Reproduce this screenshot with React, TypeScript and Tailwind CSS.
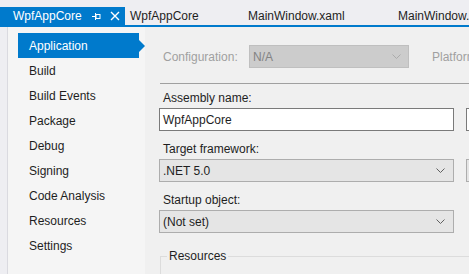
import React from "react";

const Chevron = ({ color = "#606060" }: { color?: string }) => (
  <svg width="9" height="5" viewBox="0 0 9 5" fill="none">
    <path d="M0.5 0.5 L4.5 4.5 L8.5 0.5" stroke={color} strokeWidth="1" />
  </svg>
);

export default function App() {
  const items = ["Build", "Build Events", "Package", "Debug", "Signing", "Code Analysis", "Resources", "Settings"];
  return (
    <div
      className="w-[469px] h-[274px] overflow-hidden flex flex-col bg-[#eeeef2] text-[12px] text-[#1e1e1e]"
      style={{ fontFamily: '"Liberation Sans", Arial, sans-serif' }}
    >
      {/* Tabs */}
      <div className="h-[25px] pt-[7px] flex shrink-0 whitespace-nowrap">
        <div className="w-[125px] h-[18px] bg-[#007acc] text-white flex items-center pl-[13px] shrink-0">
          <span className="leading-[18px]">WpfAppCore</span>
          <svg className="ml-[10px]" width="9" height="9" viewBox="0 0 9 9" fill="none">
            <path d="M0 4.5 H3" stroke="white" strokeWidth="1" />
            <path d="M3.5 1 V8" stroke="white" strokeWidth="1" />
            <rect x="4" y="2.5" width="4" height="4" stroke="white" strokeWidth="1" />
          </svg>
          <svg className="ml-[9px]" width="10" height="10" viewBox="0 0 10 10" fill="none">
            <path d="M1 1 L9 9 M9 1 L1 9" stroke="white" strokeWidth="1.4" />
          </svg>
        </div>
        <div className="w-[118px] h-[18px] pl-[5px] flex items-center shrink-0 text-[#1e1e1e]">WpfAppCore</div>
        <div className="w-[150px] h-[18px] pl-[5px] flex items-center shrink-0 text-[#1e1e1e]">MainWindow.xaml</div>
        <div className="h-[18px] pl-[5px] flex items-center shrink-0 text-[#1e1e1e]">MainWindow.xaml.cs</div>
      </div>
      <div className="h-[2px] bg-[#007acc] shrink-0" />

      {/* Body */}
      <div className="flex flex-1 min-h-0">
        <div className="w-[8px] shrink-0 bg-[#eeeef2] border-r border-[#dadae0]" />
        {/* Sidebar */}
        <div className="w-[137px] shrink-0 bg-[#f5f5f5] pt-[6px] pl-[10px]">
          <div className="flex items-center h-[25px]">
            <div className="w-[121px] h-[25px] bg-[#007acc] text-white pl-[11px] flex items-center">Application</div>
            <div className="w-0 h-0 border-t-[6px] border-b-[6px] border-l-[6px] border-t-transparent border-b-transparent border-l-[#007acc]" />
          </div>
          {items.map((it) => (
            <div key={it} className="h-[25px] pl-[11px] flex items-center">
              {it}
            </div>
          ))}
        </div>
        {/* Content */}
        <div className="flex-1 bg-[#f0f0f0] flex flex-col whitespace-nowrap min-w-0">
          <div className="mt-[18px] h-[23px] flex items-center">
            <div className="ml-[18px] w-[86px] shrink-0 text-[#a0a0a0]">Configuration:</div>
            <div className="w-[160px] h-[23px] shrink-0 bg-[#cccccc] border border-[#bfbfbf] flex items-center justify-between pl-[3px] pr-[7px] text-[#838383]">
              <span>N/A</span>
              <Chevron color="#ababab" />
            </div>
            <div className="ml-[23px] shrink-0 text-[#a0a0a0]">Platform:</div>
          </div>
          <div className="mt-[15px] ml-[15px] h-px bg-[#a0a0a0]" />

          <div className="mt-[6px] h-[16px] leading-[16px] mb-[2px] ml-[18px]">Assembly name:</div>
          <div className="flex ml-[14px]">
            <div className="w-[295px] h-[23px] shrink-0 bg-white border border-[#7a7a7a] pl-[3px] flex items-center">WpfAppCore</div>
            <div className="ml-[12px] w-[20px] h-[23px] shrink-0 bg-white border border-[#7a7a7a]" />
          </div>

          <div className="mt-[10px] h-[16px] leading-[16px] mb-[2px] ml-[18px]">Target framework:</div>
          <div className="flex ml-[14px]">
            <div className="w-[295px] h-[23px] shrink-0 bg-[#e5e5e5] border border-[#adadad] pl-[3px] pr-[8px] flex items-center justify-between">
              <span>.NET 5.0</span>
              <Chevron />
            </div>
            <div className="ml-[12px] w-[20px] h-[23px] shrink-0 bg-[#e5e5e5] border border-[#adadad]" />
          </div>

          <div className="mt-[10px] h-[16px] leading-[16px] mb-[2px] ml-[18px]">Startup object:</div>
          <div className="flex ml-[14px]">
            <div className="w-[295px] h-[23px] shrink-0 bg-[#e5e5e5] border border-[#adadad] pl-[3px] pr-[8px] flex items-center justify-between">
              <span>(Not set)</span>
              <Chevron />
            </div>
          </div>

          <div className="mt-[23px] ml-[15px] flex-1 border-l border-t border-[#dcdcdc] relative">
            <div className="absolute left-[6px] top-[-9px] px-[2px] bg-[#f0f0f0] leading-[16px]">Resources</div>
          </div>
        </div>
      </div>
    </div>
  );
}
